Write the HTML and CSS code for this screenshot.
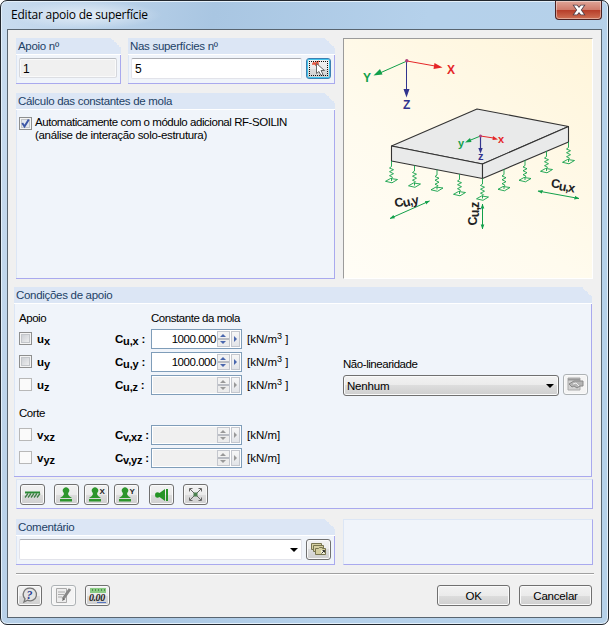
FILE: index.html
```
<!DOCTYPE html>
<html lang="pt">
<head>
    <meta charset="utf-8">
    <title>Editar apoio de superfície</title>
    <link rel="stylesheet" href="styles.css">
</head>
<body>
<div class="window">
    <div class="titlebar">
        <span class="title">Editar apoio de superfície</span>
        <button class="close" aria-label="Fechar">
            <svg width="14" height="12" viewBox="0 0 14 12"><path d="M2 1.500h3L7 4l2-2.500h3L8.800 6 12 10.500H9L7 8l-2 2.500H2L5.200 6z" fill="#fff" stroke="#53404a" stroke-width="1.600" paint-order="stroke"/></svg>
        </button>
    </div>
    <div class="client">
        <div class="top">
            <div class="left">
                <div class="row">
                    <div class="panel number">
                        <h2>Apoio nº</h2>
                        <div class="fields"><div class="text readonly">1</div></div>
                    </div>
                    <div class="panel surfaces">
                        <h2>Nas superfícies nº</h2>
                        <div class="fields">
                            <div class="text">5</div>
                            <button class="tool focus">
                                <svg width="21" height="17" viewBox="0 0 21 17"><path d="M5 2l5 4M11 1L7 5M8 1v5M4 4h7" stroke="#e5533c" stroke-width="1.300"/><path d="M8.500 3.500v10l2.500-2 2 4 2-1-2-4h3.500z" fill="#fff" stroke="#666"/></svg>
                            </button>
                        </div>
                    </div>
                </div>
                <div class="panel springs">
                    <h2>Cálculo das constantes de mola</h2>
                    <label class="auto">
                        <span class="check on"><svg width="11" height="11" viewBox="0 0 11 11"><path d="M2.200 5l2.300 3.500L8.800 1.500" fill="none" stroke="#3d57a6" stroke-width="2"/></svg></span>
                        <span>Automaticamente com o módulo adicional RF-SOILIN<br><span class="second">(análise de interação solo-estrutura)</span></span>
                    </label>
                </div>
            </div>
            <div class="picture">
                <svg width="248" height="239" viewBox="344 39 248 239">
                    <defs>
                        <g id="spring" fill="none" stroke="#12a04a" stroke-width=".9">
                            <path d="M0 0v5.500l-2 1.500 4 1.700-4 2 4 2-4 2 3 1.500-1 1V20"/>
                            <path d="M-6 20.300l5-2.800 7 1-5.500 3.300z"/>
                        </g>
                        <marker id="tip" viewBox="0 0 6 6" refX="5.500" refY="3" markerWidth="5" markerHeight="5" markerUnits="userSpaceOnUse" orient="auto-start-reverse"><path d="M0 .8L6 3 0 5.200z" fill="#12a04a"/></marker>
                    </defs>
                    <g stroke-width="1">
                        <path d="M407 61l-26 11.500" stroke="#12a04a"/>
                        <path d="M373.500 75.500l6.500-6.500 2.500 5.500z" fill="#12a04a"/>
                        <path d="M407 61l28 5" stroke="#e52628"/>
                        <path d="M442.500 67.500l-9 1.500 1-6z" fill="#e52628"/>
                        <path d="M406.500 61v29" stroke="#32348e"/>
                        <path d="M406.500 97.500l-3-8.500h6z" fill="#32348e"/>
                        <circle cx="406.800" cy="60.800" r="1.700" fill="#b0407a"/>
                    </g>
                    <g class="axis">
                        <text x="363" y="82" fill="#12a04a">Y</text>
                        <text x="447" y="74" fill="#e52628">X</text>
                        <text x="403" y="109" fill="#32348e">Z</text>
                    </g>
                    <g fill="#e9eaea" stroke="#333" stroke-width="1.100" stroke-linejoin="round">
                        <path d="M477 109l91.500 17.500-86 37.500-91-18z"/>
                        <path d="M391.500 146l91 18v14.500l-91-17.500z"/>
                        <path d="M482.500 164l86-37.500V142l-86 36.500z"/>
                    </g>
                    <path d="M480.500 136l-11 4.500" stroke="#12a04a"/>
                    <path d="M465 142.500l5-4.500 1.500 4z" fill="#12a04a"/>
                    <path d="M480.500 136l13 2" stroke="#e52628"/>
                    <path d="M498 139.500l-5.500.5.500-4z" fill="#e52628"/>
                    <path d="M480.500 136v13" stroke="#32348e" stroke-width="1.200"/>
                    <path d="M480.500 153.500l-2.200-5.500h4.400z" fill="#32348e"/>
                    <circle cx="480.500" cy="136" r="1.500" fill="#b0407a"/>
                    <g class="local">
                        <text x="458" y="146.500" fill="#12a04a">y</text>
                        <text x="498" y="143" fill="#e52628">x</text>
                        <text x="478" y="160" fill="#32348e">z</text>
                    </g>
                    <use href="#spring" x="391.500" y="161"/>
                    <use href="#spring" x="414.500" y="165.500"/>
                    <use href="#spring" x="437" y="169.500"/>
                    <use href="#spring" x="459.500" y="174"/>
                    <use href="#spring" x="482.500" y="178.500"/>
                    <use href="#spring" x="504" y="169"/>
                    <use href="#spring" x="525" y="160"/>
                    <use href="#spring" x="546.500" y="151"/>
                    <use href="#spring" x="568.500" y="142"/>
                    <g stroke="#12a04a">
                        <path d="M390 218.500L429.500 201" marker-start="url(#tip)" marker-end="url(#tip)"/>
                        <path d="M538 191l41 7.500" marker-start="url(#tip)" marker-end="url(#tip)"/>
                        <path d="M482.500 204v25" marker-start="url(#tip)" marker-end="url(#tip)"/>
                    </g>
                    <g class="constant">
                        <text transform="translate(395.500 207.500) rotate(-13)">C<tspan dy="1.500">u,y</tspan></text>
                        <text transform="translate(550.500 187) rotate(10)">C<tspan dy="1.500">u,x</tspan></text>
                        <text transform="translate(477 225.500) rotate(-90)">C<tspan dy="1.500">u,z</tspan></text>
                    </g>
                </svg>
            </div>
        </div>

        <div class="panel conditions">
            <h2>Condições de apoio</h2>
            <div class="conditions-body">
                <div class="supports">
                    <div class="line head"><span class="name">Apoio</span><span>Constante da mola</span></div>
                    <div class="line">
                        <span class="check"></span><span class="dof">u<sub>x</sub></span><span class="coef">C<sub>u,x</sub> :</span>
                        <span class="spin"><b>1000.000</b><i class="updown"></i><i class="more"></i></span><span class="unit">[kN/m<sup>3</sup> ]</span>
                    </div>
                    <div class="line">
                        <span class="check"></span><span class="dof">u<sub>y</sub></span><span class="coef">C<sub>u,y</sub> :</span>
                        <span class="spin"><b>1000.000</b><i class="updown"></i><i class="more"></i></span><span class="unit">[kN/m<sup>3</sup> ]</span>
                    </div>
                    <div class="line">
                        <span class="check off"></span><span class="dof">u<sub>z</sub></span><span class="coef">C<sub>u,z</sub> :</span>
                        <span class="spin off"><b></b><i class="updown"></i><i class="more"></i></span><span class="unit">[kN/m<sup>3</sup> ]</span>
                    </div>
                    <div class="line head shear"><span class="name">Corte</span></div>
                    <div class="line">
                        <span class="check off"></span><span class="dof">v<sub>xz</sub></span><span class="coef">C<sub>v,xz</sub> :</span>
                        <span class="spin off"><b></b><i class="updown"></i><i class="more"></i></span><span class="unit">[kN/m]</span>
                    </div>
                    <div class="line">
                        <span class="check off"></span><span class="dof">v<sub>yz</sub></span><span class="coef">C<sub>v,yz</sub> :</span>
                        <span class="spin off"><b></b><i class="updown"></i><i class="more"></i></span><span class="unit">[kN/m]</span>
                    </div>
                </div>
                <div class="nonlinear">
                    <div class="caption">Não-linearidade</div>
                    <div class="row">
                        <div class="select"><span>Nenhum</span><i class="arrow"></i></div>
                        <button class="tool disabled">
                            <svg width="17" height="15" viewBox="0 0 17 15"><path d="M1 1h12v12H1z" fill="#d2d2d2" stroke="#aaa"/><path d="M1 2.500h12" stroke="#999" stroke-width="2"/><path d="M2 7l5-3h9v5h-3l-3 2-3-2-2 1z" fill="#b5b5b5" stroke="#888"/><path d="M6 7l3-1 3 3" fill="none" stroke="#eee"/></svg>
                        </button>
                    </div>
                </div>
            </div>
        </div>

        <div class="plain toolbar">
            <button class="tool">
                <svg width="17" height="8" viewBox="0 0 17 8"><path d="M1 1.500h15" stroke="#2a8a35" stroke-width="2"/><path d="M1 6.500l3-4M4 6.500l3-4M7 6.500l3-4M10 6.500l3-4M13 6.500l3-4" stroke="#3f7d45" stroke-width="1.300"/></svg>
            </button>
            <button class="tool">
                <svg width="15" height="16" viewBox="0 0 15 16"><use href="#pawn"/></svg>
            </button>
            <button class="tool">
                <svg width="19" height="16" viewBox="0 0 19 16"><use href="#pawn" x="1"/><text x="12.500" y="7">X</text></svg>
            </button>
            <button class="tool">
                <svg width="19" height="16" viewBox="0 0 19 16"><use href="#pawn" x="1"/><text x="12.500" y="7">Y</text></svg>
            </button>
            <button class="tool">
                <svg width="17" height="14" viewBox="0 0 17 14"><path d="M2.500 5q2-1.500 4 0l5.500-4v12L6.500 9q-2 1.500-4 0-1-2 0-4z" fill="#259425"/><path d="M14 1v12" stroke="#259425" stroke-width="2"/></svg>
            </button>
            <button class="tool">
                <svg width="15" height="15" viewBox="0 0 15 15"><path d="M2 2l11 11M13 2L2 13M1.500 4.500v-3h3M10.500 1.500h3v3M1.500 10.500v3h3M10.500 13.500h3v-3" fill="none" stroke="#666"/><path d="M5.500 5.500h4v4h-4z" fill="#4c7f4f"/></svg>
            </button>
        </div>

        <div class="row comments">
            <div class="panel comment">
                <h2>Comentário</h2>
                <div class="fields">
                    <div class="text combo"><i class="arrow"></i></div>
                    <button class="tool">
                        <svg width="17" height="13" viewBox="0 0 17 13"><g fill="#d5cfa0" stroke="#77744f"><path d="M1.500 6.500v-6h10v6z"/><path d="M3.500 8.500v-6h10v6z"/><path d="M5.500 11.500v-6h3l1-1h3v1h3v6z"/></g><path d="M11 7h4v4h-4z" fill="#f3f1d8"/><path d="M11.500 10.500l3-3h-2m2 0v2" fill="none" stroke="#333"/></svg>
                    </button>
                </div>
            </div>
            <div class="plain empty"></div>
        </div>

        <div class="footer">
            <button class="tool">
                <svg width="17" height="17" viewBox="0 0 17 17"><path d="M9 1.200a6.300 6.300 0 1 1-2.500 12L3 15l1-3.200A6.300 6.300 0 0 1 9 1.200z" fill="#e3e3e3" stroke="#777" stroke-width="1.300"/><text class="help" x="5.500" y="12">?</text></svg>
            </button>
            <button class="tool disabled">
                <svg width="17" height="17" viewBox="0 0 17 17"><path d="M1.500 1.500h10v14h-10z" fill="#ededed" stroke="#aaa"/><path d="M3 5h7M3 7.500h6M3 10h4" stroke="#aaa"/><path d="M15 2l-7 10" stroke="#888" stroke-width="3"/><path d="M7 14l1-3 2 1.500z" fill="#666"/></svg>
            </button>
            <button class="tool">
                <svg width="19" height="17" viewBox="0 0 19 17"><path d="M2 1h16v5H2z" fill="#8acb83"/><path d="M4.500 2v2M7.500 2v2M10.500 2v2M13.500 2v2M16.500 2v2" stroke="#519050"/><path d="M9 15.500h9" stroke="#5575c0"/><text class="decimals" x="1" y="14">0.00</text></svg>
            </button>
            <button class="push ok">OK</button>
            <button class="push">Cancelar</button>
        </div>
    </div>
</div>
<svg width="0" height="0" class="shared">
    <g id="pawn"><path d="M4.500 5.500a3.200 3.200 0 1 1 5 0L9 7q.5 2.500 4 4H1q3.500-1.500 4-4z" fill="#2c962c"/><path d="M1 12h12v2.500H1z" fill="#2c962c"/></g>
</svg>
</body>
</html>
```
FILE: styles.css
```
* {
    box-sizing: border-box;
}
body {
    margin: 0;
    background: #fff;
    font-family: "Liberation Sans", Arial, sans-serif;
    font-size: 11.5px;
    letter-spacing: -0.45px;
    color: #000;
    overflow: hidden;
}
button {
    font: inherit;
    letter-spacing: inherit;
    color: inherit;
    padding: 0;
}
svg {
    display: block;
    flex: none;
}
.shared {
    position: absolute;
}
.window {
    width: 609px;
    height: 625px;
    padding: 0 6px 6px;
    border: 1px solid #22272e;
    border-radius: 7px;
    background: linear-gradient(100deg, #c9dcef 0, #a9c6e2 30%, #b5d1eb 60%, #b6d1e9 100%);
    box-shadow: inset 0 0 0 1px #e4f0fa;
}
.titlebar {
    height: 28px;
    display: flex;
    justify-content: space-between;
    padding-left: 4px;
}
.title {
    font-family: "Open Sans", sans-serif;
    font-size: 12px;
    letter-spacing: -0.22px;
    line-height: 27px;
    padding-right: 14px;
    background: radial-gradient(closest-side, rgba(255,255,255,0.6), rgba(255,255,255,0));
}
.close {
    width: 47px;
    height: 19px;
    display: flex;
    align-items: center;
    justify-content: center;
    border: 1px solid #4c2222;
    border-top: 0;
    border-radius: 0 0 4px 4px;
    background: linear-gradient(#dfa598 0, #d07c6c 48%, #b63c28 50%, #cf7155 100%);
    box-shadow: inset 0 0 0 1px rgba(255,255,255,0.4);
}
.client {
    height: 589px;
    padding: 8px 8px 0;
    border: 1px solid #596570;
    background: #f0f0f0;
}
.top, .row {
    display: flex;
}
.top {
    gap: 8px;
}
.left {
    width: 319px;
}
.panel {
    position: relative;
    border: solid #a9a9ee;
    border-width: 0 1px 1px 0;
    background: #f0f4fa;
    box-shadow: inset 1px 0 #dce6f5;
}
.panel h2 {
    height: 17px;
    margin: 0 -1px 0 0;
    padding-left: 2px;
    border-bottom: 1px solid #fff;
    background: #dce6f5;
    color: #1d4166;
    font-size: 11.5px;
    font-weight: normal;
    line-height: 17px;
    letter-spacing: -0.3px;
}
/* cut corner of the header */
.panel h2::after {
    content: "";
    position: absolute;
    top: 0;
    right: -1px;
    width: 10px;
    height: 10px;
    background: linear-gradient(45deg, #dce6f5 50%, #f0f0f0 50%);
}
.number {
    width: 105px;
    height: 46px;
    margin-right: 7px;
}
.surfaces {
    width: 207px;
    height: 46px;
}
.fields {
    display: flex;
    gap: 4px;
    padding: 3px 3px 0;
}
.text {
    flex: 1;
    height: 21px;
    padding-left: 3px;
    border: 1px solid #e2e3ea;
    border-top-color: #abadb3;
    border-radius: 2px;
    background: #fff;
    font-size: 12px;
    line-height: 20px;
}
.readonly {
    height: 20px;
    border-color: #b9bcc2 #d5d7dc #dcdee3;
    background: #f0f0f0;
    box-shadow: inset 0 0 0 1px #fafafa;
}
.tool {
    width: 25px;
    height: 21px;
    flex: none;
    display: flex;
    align-items: center;
    justify-content: center;
    border: 1px solid #707070;
    border-radius: 3px;
    background: linear-gradient(#f2f2f2 0, #ebebeb 50%, #dddddd 50%, #cfcfcf 100%);
    box-shadow: inset 0 0 0 1px #fafafa;
}
.focus {
    border-color: #3c7fb1;
    box-shadow: inset 0 0 0 1px #41c5ee;
    outline: 1px dotted #111;
    outline-offset: -4px;
}
.disabled {
    border-color: #adb2b5;
    background: #f4f4f4;
}
.springs {
    height: 186px;
    margin-top: 9px;
}
.auto {
    display: flex;
    gap: 3px;
    padding: 6px 0 0 3px;
    line-height: 13px;
}
.second {
    letter-spacing: -0.33px;
}
.check {
    width: 13px;
    height: 13px;
    flex: none;
    border: 1px solid #8e8f8f;
    background: linear-gradient(135deg, #c4c8ce, #f5f5f5);
    box-shadow: inset 0 0 0 1px #f4f4f4, inset 0 0 0 2px #c3c6ca;
}
.auto .check {
    margin-top: 1px;
}
.on {
    background: #e3e8f0;
}
.off.check {
    border-color: #b8b8b8;
    background: #fafafa;
    box-shadow: none;
}
.picture {
    width: 250px;
    height: 241px;
    border: 1px solid #9b9b9b;
    border-right-color: #fff;
    border-bottom-color: #fff;
    background: linear-gradient(35deg, #fffdf6 0, #fffbee 40%, #fff5da 100%);
    letter-spacing: 0;
}
.axis {
    font-weight: bold;
    font-size: 12px;
}
.local {
    font-weight: bold;
    font-size: 11px;
}
.constant {
    font-weight: bold;
    font-size: 12.5px;
    letter-spacing: -0.9px;
    fill: #222;
}
.conditions {
    height: 190px;
    margin: 8px 1px 0 -2px;
}
.conditions-body {
    display: flex;
    padding: 3px 0 0 5px;
}
.supports {
    width: 324px;
}
.line {
    height: 23px;
    display: flex;
    align-items: center;
}
.head {
    height: 20px;
    padding-top: 2px;
}
.name {
    width: 132px;
}
.shear {
    height: 27px;
    padding-top: 7px;
}
.dof, .coef {
    font-size: 11.5px;
    font-weight: bold;
    white-space: nowrap;
    letter-spacing: 0;
    padding-top: 1px;
}
.dof {
    width: 83px;
    padding-left: 5px;
}
.coef {
    width: 36px;
    letter-spacing: -0.2px;
}
sub, sup {
    font-size: 11px;
    line-height: 0;
    vertical-align: -2px;
}
sup {
    font-size: 9px;
    vertical-align: 4px;
}
.spin {
    width: 91px;
    height: 20px;
    flex: none;
    display: flex;
    border: 1px solid #7f9db9;
    background: #fff;
    padding: 1px;
}
.spin b {
    flex: 1;
    padding-right: 1px;
    font-weight: normal;
    text-align: right;
    line-height: 17px;
}
.spin.off b {
    background: #f0f0f0;
}
.updown, .more {
    position: relative;
    border: 1px solid #c4c7ce;
    background: linear-gradient(#f7f7f7, #e2e4e8);
}
.updown {
    width: 13px;
    margin-right: 1px;
    background: linear-gradient(#f2f2f2 46%, #b9bcc3 46%, #b9bcc3 54%, #ececec 54%);
}
.more {
    width: 9px;
}
.updown::before, .updown::after, .more::after {
    content: "";
    position: absolute;
    border: 3px solid transparent;
}
.updown::before {
    left: 2px;
    top: -1px;
    border-bottom-color: #4a67ad;
}
.updown::after {
    left: 2px;
    bottom: -1px;
    border-top-color: #4a67ad;
}
.more::after {
    left: 2px;
    top: 4px;
    border-left-color: #4a67ad;
}
.off .updown::before {
    border-bottom-color: #999;
}
.off .updown::after {
    border-top-color: #999;
}
.off .more::after {
    border-left-color: #999;
}
.unit {
    margin-left: 5px;
    letter-spacing: 0;
}
.nonlinear {
    padding-top: 50px;
}
.caption {
    height: 17px;
    line-height: 14px;
}
.select {
    width: 216px;
    height: 21px;
    margin: 1px 4px 0 0;
    padding: 0 4px 0 3px;
    display: flex;
    align-items: center;
    justify-content: space-between;
    border: 1px solid #707070;
    border-radius: 3px;
    background: linear-gradient(#f2f2f2 0, #ebebeb 50%, #dddddd 50%, #cfcfcf 100%);
    box-shadow: inset 0 0 0 1px #fafafa;
    letter-spacing: -0.2px;
}
.arrow {
    border: 4px solid transparent;
    border-top-color: #000;
    border-bottom: 0;
}
.plain {
    border: 1px solid #dce6f5;
    border-right-color: #a9a9ee;
    border-bottom-color: #a9a9ee;
    background: #f0f4fa;
}
.toolbar {
    width: 577px;
    height: 30px;
    margin-top: 2px;
    padding: 4px 0 0 3px;
    display: flex;
}
.toolbar .tool {
    margin-right: 5px;
}
.toolbar .tool:nth-child(1) {
    margin-right: 9px;
}
.toolbar .tool:nth-child(4) {
    margin-right: 10px;
}
.toolbar .tool:nth-child(5) {
    margin-right: 9px;
}
.toolbar text {
    font-size: 8px;
    font-weight: bold;
    fill: #222;
}
.comments {
    margin-top: 10px;
    gap: 8px;
}
.comment {
    width: 319px;
    height: 46px;
}
.combo {
    display: flex;
    align-items: center;
    justify-content: flex-end;
    padding-right: 3px;
}
.empty {
    width: 250px;
    height: 46px;
}
.footer {
    width: 578px;
    margin-top: 8px;
    padding: 11px 2px 0 1px;
    border-top: 1px solid #a0a0a0;
    box-shadow: inset 0 1px #fff;
    display: flex;
    gap: 9px;
}
.help {
    font: italic bold 12px "Liberation Serif", serif;
    fill: #2b3d91;
}
.decimals {
    font: italic bold 10px "Liberation Serif", serif;
    fill: #222;
}
.push {
    width: 73px;
    height: 21px;
    border: 1px solid #707070;
    border-radius: 3px;
    background: linear-gradient(#f2f2f2 0, #ebebeb 50%, #dddddd 50%, #cfcfcf 100%);
    box-shadow: inset 0 0 0 1px #fafafa;
    letter-spacing: -0.2px;
}
.ok {
    margin-left: auto;
}
```
